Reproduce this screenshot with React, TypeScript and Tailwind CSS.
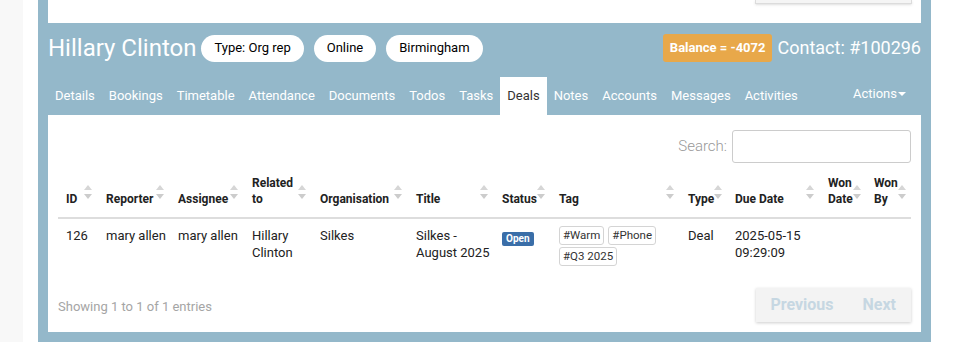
import React from 'react';

const tabs = [
    'Details',
    'Bookings',
    'Timetable',
    'Attendance',
    'Documents',
    'Todos',
    'Tasks',
    'Deals',
    'Notes',
    'Accounts',
    'Messages',
    'Activities'
];

interface Column {
    label: React.ReactNode;
    width: string;
}

const columns: Column[] = [
    { label: 'ID', width: 'w-[40px]' },
    { label: 'Reporter', width: 'w-[72px]' },
    { label: 'Assignee', width: 'w-[74px]' },
    { label: <>Related<br />to</>, width: 'w-[68px]' },
    { label: 'Organisation', width: 'w-[96px]' },
    { label: 'Title', width: 'w-[86px]' },
    { label: 'Status', width: 'w-[57px]' },
    { label: 'Tag', width: 'w-[129px]' },
    { label: 'Type', width: 'w-[47px]' },
    { label: 'Due Date', width: 'w-[93px]' },
    { label: <>Won<br />Date</>, width: 'w-[46px]' },
    { label: <>Won<br />By</>, width: 'w-[45px]' }
];

const SortIcon: React.FC = () => (
    <svg width="8" height="15" viewBox="0 0 8 15" className="flex-shrink-0 mb-[7px]">
        <path d="M4 0 L8 5 L0 5 Z" fill="#d6d6d6" />
        <path d="M0 9 L8 9 L4 14 Z" fill="#cccccc" />
    </svg>
);

const Tag: React.FC<{ text: string }> = ({ text }) => (
    <span className="inline-flex items-center h-[19px] px-[3px] border border-[#d4d4d4] rounded-[3px] text-[11.5px] text-[#333] bg-white">
        {text}
    </span>
);

const pill = 'h-[27px] px-[13px] rounded-full bg-white text-black text-[13px] flex items-center';

const App: React.FC = () => {
    return (
        <div className="w-[967px] h-[364px] bg-white overflow-hidden" style={{ fontFamily: 'Roboto, "Liberation Sans", sans-serif' }}>
            <div className="flex h-[342px]">
                <div className="w-[23px] bg-[#f8f8f8]" />
                <div className="w-[15px]" />
                <div className="w-[893px] bg-[#94b8ca] px-[10px] pb-[10px] flex flex-col">
                    {/* previous card */}
                    <div className="h-[23px] bg-white flex justify-end pr-[9px]">
                        <div className="w-[157px] h-[4px] border-x border-b border-[#dcdcdc] bg-[#f5f5f5] shadow-sm" />
                    </div>

                    {/* header */}
                    <div className="flex items-center pt-[11px] pb-[15px]">
                        <h1 className="text-[24px] leading-[27px] text-white font-normal mr-[5px]">Hillary Clinton</h1>
                        <div className="flex gap-[10px]">
                            <span className={pill}>Type: Org rep</span>
                            <span className={pill}>Online</span>
                            <span className={pill}>Birmingham</span>
                        </div>
                        <div className="ml-auto flex items-center">
                            <span className="h-[28px] px-[7px] rounded-[3px] bg-[#e8a84a] text-white text-[13px] font-bold flex items-center">Balance = -4072</span>
                            <span className="ml-[5px] text-[18px] text-white leading-[28px]">Contact: #100296</span>
                        </div>
                    </div>

                    {/* tabs */}
                    <div className="flex h-[38px] items-stretch">
                        {tabs.map(t => (
                            <div
                                key={t}
                                className={`px-[7px] flex items-center text-[13px] ${t === 'Deals' ? 'bg-white text-[#333]' : 'text-white'}`}
                            >
                                {t}
                            </div>
                        ))}
                        <div className="ml-auto pr-[15px] flex items-center pb-[4px] text-[13px] text-white">
                            Actions
                            <svg width="8" height="4" viewBox="0 0 8 4" className="ml-[1px]">
                                <path d="M0 0 L8 0 L4 4 Z" fill="white" />
                            </svg>
                        </div>
                    </div>

                    {/* content */}
                    <div className="flex-1 bg-white px-[10px] pt-[15px] pb-[10px] flex flex-col">
                        <div className="flex justify-end items-center">
                            <label className="text-[15px] text-[#999] font-light mr-[5px]">Search:</label>
                            <input className="w-[179px] h-[33px] border border-[#cccccc] rounded-[3px] outline-none" />
                        </div>

                        <table className="table-fixed w-[853px] border-collapse mt-[8px]">
                            <thead>
                                <tr>
                                    {columns.map((c, i) => (
                                        <th
                                            key={i}
                                            className={`${c.width} align-bottom text-left pl-[8px] pr-[6px] pt-[4px] pb-[10px] border-b-2 border-[#dddddd] text-[12px] leading-[16px] font-bold text-[#222]`}
                                        >
                                            <div className="flex items-end justify-between">
                                                <span>{c.label}</span>
                                                <SortIcon />
                                            </div>
                                        </th>
                                    ))}
                                </tr>
                            </thead>
                            <tbody className="text-[13px] leading-[17px] text-[#222]">
                                <tr>
                                    <td className="align-top px-[8px] pt-[8px] pb-[8px]">126</td>
                                    <td className="align-top px-[8px] pt-[8px] whitespace-nowrap">mary allen</td>
                                    <td className="align-top px-[8px] pt-[8px] whitespace-nowrap">mary allen</td>
                                    <td className="align-top px-[8px] pt-[8px]">Hillary<br />Clinton</td>
                                    <td className="align-top px-[8px] pt-[8px]">Silkes</td>
                                    <td className="align-top px-[8px] pt-[8px] whitespace-nowrap">Silkes -<br />August 2025</td>
                                    <td className="align-top px-[8px] pt-[10px]">
                                        <span className="inline-flex items-center h-[14px] px-[4px] rounded-[2px] bg-[#3a6ea8] text-white text-[10px] font-bold">Open</span>
                                    </td>
                                    <td className="align-top px-[8px] pt-[7px] pb-[8px]">
                                        <div className="flex gap-[4px]">
                                            <Tag text="#Warm" />
                                            <Tag text="#Phone" />
                                        </div>
                                        <div className="flex mt-[2px]">
                                            <Tag text="#Q3 2025" />
                                        </div>
                                    </td>
                                    <td className="align-top px-[8px] pt-[8px]">Deal</td>
                                    <td className="align-top px-[8px] pt-[8px]">2025-05-15<br />09:29:09</td>
                                    <td className="align-top px-[8px] pt-[8px]"></td>
                                    <td className="align-top px-[8px] pt-[8px]"></td>
                                </tr>
                            </tbody>
                        </table>

                        <div className="mt-auto flex items-center justify-between">
                            <span className="text-[13px] text-[#a5a5a5] mt-[4px]">Showing 1 to 1 of 1 entries</span>
                            <div className="flex h-[34px] bg-[#f3f3f3] shadow-[0_1px_3px_rgba(0,0,0,0.2)]">
                                <span className="pl-[14px] pr-[15px] flex items-center text-[16px] font-bold text-[#c6d7e2]">Previous</span>
                                <span className="pl-[14px] pr-[15px] flex items-center text-[16px] font-bold text-[#c6d7e2]">Next</span>
                            </div>
                        </div>
                    </div>
                </div>
            </div>
        </div>
    );
};

export default App;
